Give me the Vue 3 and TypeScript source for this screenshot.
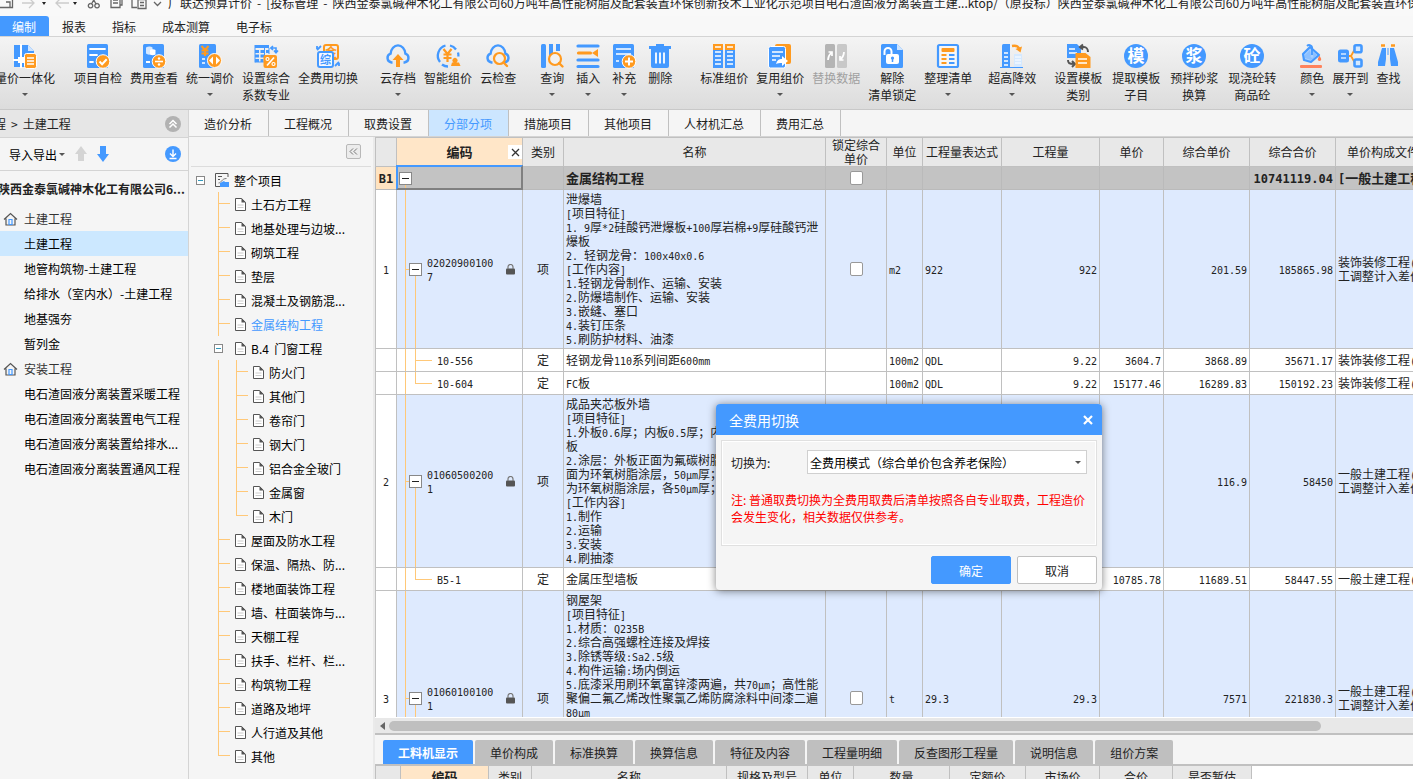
<script setup lang="ts">
import { h, ref } from 'vue'
import type { FunctionalComponent } from 'vue'

interface Tool { icon: string; lines: string[]; menu?: boolean; disabled?: boolean }
interface ToolGroup { name: string; tools: Tool[] }
interface TreeNode { text: string; depth: number; branch?: boolean; active?: boolean; last?: boolean }
interface Row {
  kind: 'group' | 'item' | 'child'
  no: string
  code: string[]
  type: string
  name: string[]
  check?: boolean
  unit?: string
  expr?: string
  qty?: string
  price?: string
  unitPrice?: string
  total?: string
  file: string[]
  last?: boolean
  tall?: boolean
}

/* Splits a string so that half-width characters sit on a fixed grid beside full-width ones. */
const MixedText: FunctionalComponent<{ text: string }> = (props) =>
  props.text
    .split(/([\x20-\x7eμ]+)/)
    .filter((s) => s.length > 0)
    .map((s) => h('span', { class: /^[\x20-\x7eμ]/.test(s) ? 'half' : 'full' }, s))
MixedText.props = ['text']

const B = '#4499ff'
const O = '#ff9a1f'
const disc = (c: string) =>
  `<circle cx="12" cy="12" r="12" fill="${B}"/><text x="12" y="18" font-size="17" font-weight="700" text-anchor="middle" fill="#fff" font-family="Noto Sans CJK SC, sans-serif">${c}</text>`
const page = `<rect x="1" y="0" width="21" height="24" rx="1.5" fill="${B}"/>`
const cloud = `<path d="M6.5 18.5H5.5A4.6 4.6 0 0 1 4.6 9.6C5 4.800 8.200 1.400 12 1.400s7 3.400 7.400 8.200a4.600 4.600 0 0 1-.9 8.900h-1" fill="none" stroke="${B}" stroke-width="2.4"/>`

const icons: Record<string, string> = {
  price: `<path d="M1 1h14l6 6v16H1z" fill="${B}"/><path d="M15 1l6 6h-6z" fill="#cfe5ff"/><path d="M8 0v24M0 16h14" stroke="#fff" stroke-width="2"/><rect x="5" y="13" width="6" height="6" fill="#fff"/><rect x="11.500" y="9.500" width="12" height="15" rx="2" fill="${O}" stroke="#fff"/><path d="M14 14h7M14 17h7M14 20h7" stroke="#fff" stroke-width="1.500"/>`,
  check: `${page}<path d="M4 5h15M4 11h7M4 18h3" stroke="#fff" stroke-width="1.800" stroke-linecap="round"/><circle cx="17" cy="17.500" r="6.800" fill="${O}" stroke="#fff"/><path d="M13.500 17.500l2.600 2.800 4.600-5" fill="none" stroke="#fff" stroke-width="2"/>`,
  cost: `${page}<path d="M4 3.500c2-1.500 5-1.500 6.500 0v6c-2 1.500-5 1.500-6.500 0z" fill="#d7e9ff"/><path d="M8 6c1.500-1 4-1 5.500 0v4.500c-1.500 1-4 1-5.500 0z" fill="#fff"/><path d="M4 18h4" stroke="#fff" stroke-width="2"/><circle cx="17" cy="17.500" r="6.800" fill="${O}" stroke="#fff"/><path d="M13 17.500h8" stroke="#fff" stroke-width="1.600"/><circle cx="17" cy="14.500" r="1.200" fill="#fff"/><circle cx="17" cy="20.500" r="1.200" fill="#fff"/>`,
  adjust: `<rect x="1" y="0" width="17" height="24" rx="1.500" fill="${B}"/><path d="M3.500 2l3.500 4 3.500-4M7 6v6M3.500 6.500h7M3.500 9.500h7" stroke="${O}" stroke-width="2" fill="none"/><path d="M4 15h3M4 19h3" stroke="#fff" stroke-width="1.600"/><circle cx="16.500" cy="16.500" r="7" fill="${O}" stroke="#fff"/><path d="M15 12.500v8l-4-4zM18 12.500v8l4-4z" fill="#fff"/>`,
  ratio: `<path d="M1 1h14v3H1zM1 6h4v3H1zM6.500 6h4v3h-4zM12 6h3v3h-3zM1 10.500h4v3H1zM6.500 10.500h4v3h-4zM1 15h4v3H1zM6.500 15h3v3h-3z" fill="${B}"/><path d="M1 1v17.500M1 18h9M15 4v6M10.500 4v10" stroke="${B}"/><path d="M17 4h5v4M20 6.500l2 2.300 2-2.300M19 2l-2.200 2L19 6" fill="none" stroke="${B}" stroke-width="1.600"/><rect x="9.500" y="11" width="13.500" height="13" rx="2" fill="${O}"/><path d="M20 13.500l-7 8" stroke="#fff" stroke-width="1.600"/><circle cx="13.500" cy="15" r="1.500" fill="none" stroke="#fff" stroke-width="1.200"/><circle cx="19.500" cy="20" r="1.500" fill="none" stroke="#fff" stroke-width="1.200"/>`,
  swap: `<rect x="8" y="1" width="14" height="14" rx="2" fill="none" stroke="${O}" stroke-width="2"/><text x="15" y="12.500" font-size="12" font-weight="700" text-anchor="middle" fill="${O}" font-family="Noto Sans CJK SC, sans-serif">金</text><rect x="2" y="8" width="15" height="15" rx="2" fill="#f4f8ff" stroke="${B}" stroke-width="2"/><text x="9.500" y="19.500" font-size="11" font-weight="700" text-anchor="middle" fill="${B}" font-family="Noto Sans CJK SC, sans-serif">综</text><path d="M1 6l4-4M19 22l4-4M23 22v-3M1 2v3" stroke="${B}" stroke-width="1.800"/>`,
  upload: `${cloud}<path d="M12 10l5.500 6H14v7h-4v-7H6.500z" fill="${O}"/>`,
  smart: `<path d="M9.500 1.500A10.500 10.500 0 0 0 4 18M6 20.500a10 10 0 0 0 6 2M14 1.500a10.500 10.500 0 0 1 6 4M22 8.500a10 10 0 0 1 .4 4" fill="none" stroke="${B}" stroke-width="2.300"/><path d="M7.500 5l4 5 4-5M11.500 10v8M7.500 10.500h8M7.500 14h8" fill="none" stroke="${O}" stroke-width="2.200"/><path d="M15 22l1-3.500h1.500a2.500 2.500 0 1 1 3 0H23l1.500 3.500z" fill="${O}"/>`,
  cloudcheck: `${cloud}<circle cx="13.500" cy="14.500" r="5.500" fill="#f0f0f0" stroke="${O}" stroke-width="2.200"/><path d="M17.500 18.500l3.500 3.500" stroke="${O}" stroke-width="2.400" stroke-linecap="round"/>`,
  query: `<rect x="1" y="0" width="5" height="24" rx="1.500" fill="${B}"/><path d="M9 0h4v9l-4 4zM16 0h4v7h-4z" fill="${B}"/><circle cx="15" cy="15" r="6" fill="#f2f2f2" stroke="${O}" stroke-width="2.200"/><path d="M19 19l3.500 3.500" stroke="${O}" stroke-width="2.400" stroke-linecap="round"/>`,
  insert: `<path d="M2 2h20M2 16h20M2 22.500h20" stroke="${B}" stroke-width="3.200" stroke-linecap="round"/><path d="M2.500 9h12" stroke="${O}" stroke-width="3.200" stroke-linecap="round"/><path d="M16 9l6-4v8z" fill="${O}"/>`,
  add: `${page}<path d="M4 5h15M4 10h15M4 17h3" stroke="#fff" stroke-width="1.500"/><circle cx="17" cy="17.500" r="6.800" fill="${O}" stroke="#fff"/><path d="M17 13.500v8M13 17.500h8" stroke="#fff" stroke-width="2"/>`,
  trash: `<path d="M1 2h7V0h8v2h7v3H1z" fill="${B}"/><path d="M3 5h18v17a2 2 0 0 1-2 2H5a2 2 0 0 1-2-2z" fill="${B}"/><path d="M8 8.500v11M12 8.500v11M16 8.500v11" stroke="#fff" stroke-width="1.800"/>`,
  standard: `<path d="M1 0h10v6H1zM13 0h10v6H13z" fill="${O}"/><path d="M1 6h10v18H1zM13 6h10v18H13z" fill="${B}"/><path d="M3 3h6M15 3h6M3 8h6M15 8h6M3 12h6M15 12h6M3 16h6M15 16h6M3 20h6M15 20h6" stroke="#fff" stroke-width="1.500"/>`,
  reuse: `<rect x="7" y="0" width="16" height="20" rx="2" fill="${O}"/><rect x=".5" y="2.500" width="17" height="21.500" rx="2" fill="${B}" stroke="#fff"/><path d="M4 8h11M4 12h8M4 16h4" stroke="#fff" stroke-width="1.600"/><path d="M8 20c1-4 3-5 6-5v-3l6 5-6 5v-3c-3 0-4 0-6 1z" fill="#fff"/>`,
  replace: `<rect x="1" y="0" width="10" height="24" rx="1.500" fill="#b4b4b4"/><rect x="13" y="0" width="10" height="24" rx="1.500" fill="#c8c8c8"/><path d="M4 16c0-4 1-5 3-7M4.500 8H8v4M20 8c0 4-1 5-3 7M16 12v4h3.500" fill="none" stroke="#fff" stroke-width="1.700"/>`,
  unlock: `<path d="M1 1.500A1.500 1.500 0 0 1 2.500 0H17l6 6v16.500a1.500 1.500 0 0 1-1.500 1.500h-19A1.500 1.500 0 0 1 1 22.500z" fill="${B}"/><path d="M17 0v6h6z" fill="#cfe5ff"/><rect x="6" y="10" width="13" height="10" rx="2" fill="#fff"/><path d="M4.500 11V7.500a3.500 3.500 0 0 1 7 0V11" fill="none" stroke="#fff" stroke-width="2"/><circle cx="12.500" cy="14" r="1.600" fill="${B}"/><path d="M12.500 14v4" stroke="${B}" stroke-width="1.500"/>`,
  tidy: `<rect x="2" y="1" width="20" height="22" rx="1.500" fill="#f6f6f6" stroke="${B}" stroke-width="2.200"/><rect x="5.500" y="4" width="13" height="4" rx="1" fill="${O}"/><path d="M5.500 11h5M5.500 15h5M5.500 19h5" stroke="${O}" stroke-width="1.800"/><path d="M13 11h5.500M13 15h5.500M13 19h5.500" stroke="${B}" stroke-width="1.800"/>`,
  height: `<path d="M2 1.500A1.500 1.500 0 0 1 3.500 0H10v24H2z" fill="${B}"/><path d="M4 9h4M4 13h4M4 17h4M4 21h4" stroke="#fff" stroke-width="1.500"/><rect x="14" y="10" width="8" height="13" fill="#d5e9ff"/><path d="M15 13h6M15 16h6M15 19h6" stroke="#fff"/><path d="M0 23.500h23" stroke="${B}"/><path d="M12 2c5-1 7 1 7.500 4" fill="none" stroke="${O}" stroke-width="2.400"/><path d="M15.500 5l5 3.500L22 2.500z" fill="${O}"/>`,
  template: `<path d="M1 0h10l4 4v10H1z" fill="${B}"/><path d="M3 5h6M3 9h8" stroke="#fff" stroke-width="1.300"/><path d="M14 3h4c2 0 4 2 4 5M17 .5L14 3l3 2.500" fill="none" stroke="#555" stroke-width="2"/><path d="M2 16c0 3 1 4 6 4M6 17l3 3-3 3" fill="none" stroke="#555" stroke-width="2"/><path d="M9.500 9h10l5 4v11h-15z" fill="${O}"/><path d="M12 15h9M12 19h9" stroke="#fff" stroke-width="1.600"/>`,
  mo: disc('模'),
  jiang: disc('浆'),
  tong: disc('砼'),
  color: `<path d="M10 3l9 8-8 7-7-2-1-6z" fill="#a9d0ff" stroke="${B}" stroke-width="2.200" stroke-linejoin="round"/><path d="M5 11l5-5 1 5a1.500 1.500 0 1 0 2 0V8l4 3-6 5-6-2z" fill="#8cc0ff"/><path d="M12 11V5a3 3 0 0 0-5-3" fill="none" stroke="${B}" stroke-width="1.800"/><path d="M19.500 11.500l1.500 3a1.700 1.700 0 1 1-3 0z" fill="#ff7f50"/><rect x="0" y="21" width="22" height="3" rx="1" fill="#ff835c"/>`,
  expand: `<path d="M9 12h4l4-7h2M13 12l4 7h2" fill="none" stroke="${O}" stroke-width="1.800"/><rect x="1" y="6.500" width="9" height="11" rx="1.500" fill="${B}" stroke="${B}" stroke-width="2"/><path d="M3 10h5M3 14h5" stroke="#d5e9ff" stroke-width="1.600"/><rect x="16.500" y="1.200" width="7" height="7" rx="1.500" fill="#d5e9ff" stroke="${B}" stroke-width="2.600"/><rect x="16.500" y="15.500" width="7" height="7" rx="1.500" fill="#d5e9ff" stroke="${B}" stroke-width="2.600"/>`,
  find: `<path d="M5 1.500h4M15 1.500h4" stroke="${O}" stroke-width="2.600"/><path d="M6 4h4v11l-1 7H2v-4zM14 4h4l4 14v4h-7l-1-7z" fill="${B}"/><path d="M12 4v7" stroke="${B}"/>`,
}

const toolGroups: ToolGroup[] = [
  { name: 'one', tools: [{ icon: 'price', lines: ['量价一体化'], menu: true }] },
  {
    name: 'check',
    tools: [
      { icon: 'check', lines: ['项目自检'] },
      { icon: 'cost', lines: ['费用查看'] },
      { icon: 'adjust', lines: ['统一调价'], menu: true },
      { icon: 'ratio', lines: ['设置综合', '系数专业'] },
      { icon: 'swap', lines: ['全费用切换'] },
    ],
  },
  {
    name: 'cloud',
    tools: [
      { icon: 'upload', lines: ['云存档'], menu: true },
      { icon: 'smart', lines: ['智能组价'] },
      { icon: 'cloudcheck', lines: ['云检查'] },
    ],
  },
  {
    name: 'edit',
    tools: [
      { icon: 'query', lines: ['查询'], menu: true },
      { icon: 'insert', lines: ['插入'], menu: true },
      { icon: 'add', lines: ['补充'], menu: true },
      { icon: 'trash', lines: ['删除'] },
    ],
  },
  {
    name: 'compose',
    tools: [
      { icon: 'standard', lines: ['标准组价'] },
      { icon: 'reuse', lines: ['复用组价'], menu: true },
      { icon: 'replace', lines: ['替换数据'], disabled: true },
      { icon: 'unlock', lines: ['解除', '清单锁定'] },
      { icon: 'tidy', lines: ['整理清单'], menu: true },
    ],
  },
  { name: 'tower', tools: [{ icon: 'height', lines: ['超高降效'], menu: true }] },
  {
    name: 'model',
    tools: [
      { icon: 'template', lines: ['设置模板', '类别'] },
      { icon: 'mo', lines: ['提取模板', '子目'] },
      { icon: 'jiang', lines: ['预拌砂浆', '换算'] },
      { icon: 'tong', lines: ['现浇砼转', '商品砼'] },
    ],
  },
  {
    name: 'view',
    tools: [
      { icon: 'color', lines: ['颜色'], menu: true },
      { icon: 'expand', lines: ['展开到'], menu: true },
      { icon: 'find', lines: ['查找'] },
    ],
  },
]

const menuTabs = ['编制', '报表', '指标', '成本测算', '电子标']
const titleParts = [
  '广联达预算计价',
  '-',
  '[投标管理',
  '-',
  '陕西金泰氯碱神木化工有限公司60万吨年高性能树脂及配套装置环保创新技术工业化示范项目电石渣固液分离装置土建...ktop/（原投标）陕西金泰氯碱神木化工有限公司60万吨年高性能树脂及配套装置环保',
]

const projects = [
  { text: '土建工程', home: true },
  { text: '土建工程', active: true },
  { text: '地管构筑物-土建工程' },
  { text: '给排水（室内水）-土建工程' },
  { text: '地基强夯' },
  { text: '暂列金' },
  { text: '安装工程', home: true },
  { text: '电石渣固液分离装置采暖工程' },
  { text: '电石渣固液分离装置电气工程' },
  { text: '电石渣固液分离装置给排水...' },
  { text: '电石渣固液分离装置通风工程' },
]

const pageTabs = ['造价分析', '工程概况', '取费设置', '分部分项', '措施项目', '其他项目', '人材机汇总', '费用汇总']
const activePage = ref('分部分项')

const tree: TreeNode[] = [
  { text: '土石方工程', depth: 1 },
  { text: '地基处理与边坡...', depth: 1 },
  { text: '砌筑工程', depth: 1 },
  { text: '垫层', depth: 1 },
  { text: '混凝土及钢筋混...', depth: 1 },
  { text: '金属结构工程', depth: 1, active: true },
  { text: 'B.4  门窗工程', depth: 1, branch: true },
  { text: '防火门', depth: 2 },
  { text: '其他门', depth: 2 },
  { text: '卷帘门', depth: 2 },
  { text: '钢大门', depth: 2 },
  { text: '铝合金全玻门', depth: 2 },
  { text: '金属窗', depth: 2 },
  { text: '木门', depth: 2, last: true },
  { text: '屋面及防水工程', depth: 1 },
  { text: '保温、隔热、防...', depth: 1 },
  { text: '楼地面装饰工程', depth: 1 },
  { text: '墙、柱面装饰与...', depth: 1 },
  { text: '天棚工程', depth: 1 },
  { text: '扶手、栏杆、栏...', depth: 1 },
  { text: '构筑物工程', depth: 1 },
  { text: '道路及地坪', depth: 1 },
  { text: '人行道及其他', depth: 1 },
  { text: '其他', depth: 1, last: true },
]

const rows: Row[] = [
  { kind: 'group', no: 'B1', code: [], type: '', name: ['金属结构工程'], check: true, total: '10741119.04', file: ['[一般土建工程]'] },
  {
    kind: 'item', no: '1', code: ['02020900100', '7'], type: '项',
    name: ['泄爆墙', '[项目特征]', '1. 9厚*2硅酸钙泄爆板+100厚岩棉+9厚硅酸钙泄', '爆板', '2. 轻钢龙骨：100x40x0.6', '[工作内容]', '1.轻钢龙骨制作、运输、安装', '2.防爆墙制作、运输、安装', '3.嵌缝、塞口', '4.装钉压条', '5.刷防护材料、油漆'],
    check: true, unit: 'm2', expr: '922', qty: '922', unitPrice: '201.59', total: '185865.98', file: ['装饰装修工程(人', '工调整计入差价)'],
  },
  { kind: 'child', no: '', code: ['10-556'], type: '定', name: ['轻钢龙骨110系列间距600mm'], unit: '100m2', expr: 'QDL', qty: '9.22', price: '3604.7', unitPrice: '3868.89', total: '35671.17', file: ['装饰装修工程(人'] },
  { kind: 'child', no: '', code: ['10-604'], type: '定', name: ['FC板'], unit: '100m2', expr: 'QDL', qty: '9.22', price: '15177.46', unitPrice: '16289.83', total: '150192.23', file: ['装饰装修工程(人'], last: true },
  {
    kind: 'item', no: '2', code: ['01060500200', '1'], type: '项',
    name: ['成品夹芯板外墙', '[项目特征]', '1.外板0.6厚；内板0.5厚；内', '板', '2.涂层：外板正面为氟碳树脂', '面为环氧树脂涂层，50μm厚；', '为环氧树脂涂层，各50μm厚；', '[工作内容]', '1.制作', '2.运输', '3.安装', '4.刷抽漆'],
    check: true, unitPrice: '116.9', total: '58450', file: ['一般土建工程(人', '工调整计入差价)'],
  },
  { kind: 'child', no: '', code: ['B5-1'], type: '定', name: ['金属压型墙板'], price: '10785.78', unitPrice: '11689.51', total: '58447.55', file: ['一般土建工程(人'], last: true },
  {
    kind: 'item', no: '3', code: ['01060100100', '1'], type: '项',
    name: ['钢屋架', '[项目特征]', '1.材质：Q235B', '2.综合高强螺栓连接及焊接', '3.除锈等级:Sa2.5级', '4.构件运输:场内倒运', '5.底漆采用刷环氧富锌漆两遍，共70μm；高性能', '聚偏二氟乙烯改性聚氯乙烯防腐涂料中间漆二遍', '80μm'],
    check: true, unit: 't', expr: '29.3', qty: '29.3', unitPrice: '7571', total: '221830.3', file: ['一般土建工程(人', '工调整计入差价)'], tall: true,
  },
]

const detailTabs = ['工料机显示', '单价构成', '标准换算', '换算信息', '特征及内容', '工程量明细', '反查图形工程量', '说明信息', '组价方案']
const activeDetail = ref('工料机显示')
const detailCols = ['', '编码', '类别', '名称', '规格及型号', '单位', '数量', '定额价', '市场价', '合价', '是否暂估']

const dialogOpen = ref(true)
const mode = ref('full')
</script>

<template>
  <div class="app">
    <header class="titlebar">
      <svg class="quick" width="168" height="24" viewBox="0 0 168 24" fill="none" stroke="#666" stroke-width="1.300">
        <path d="M0 17.500h12.500V2M6 12h4v5" />
        <path d="M22 13h12M29 8l5 5-5 5M57 13h12M61 8l-5 5 5 5" stroke="#ccc" />
        <path d="M90.500 13.500a2.200 2.200 0 1 0 .1 0M97 13.500a2.200 2.200 0 1 0 .1 0M91.500 14l5-9M96 14l-5-9" />
        <path d="M111 6v11.500h9V6M113 10h5M113 13h5M120 15h2V4M132 4v13.500h5M138 9.500h8v9h-8zM140 12.500h4M140 15.500h4" />
        <path d="M154 12l3.500 3.500L161 12" />
        <path d="M42 12h4l-2 3zM73 12h4l-2 3z" fill="#222" stroke="none" />
      </svg>
      <span v-for="(p, i) in titleParts" :key="i">{{ p }}</span>
    </header>

    <nav class="menu">
      <button v-for="(t, i) in menuTabs" :key="t" type="button" :class="{ active: i === 0 }">{{ t }}</button>
    </nav>

    <div class="ribbon">
      <div v-for="g in toolGroups" :key="g.name" class="tools" :class="'g-' + g.name">
        <button v-for="t in g.tools" :key="t.icon" type="button" class="tool" :disabled="t.disabled">
          <svg width="24" height="24" viewBox="0 0 24 24" v-html="icons[t.icon]"></svg>
          <span class="tool-text"><span v-for="l in t.lines" :key="l">{{ l }}</span></span>
          <i v-if="t.menu" class="caret"></i>
        </button>
      </div>
    </div>

    <div class="work">
      <aside class="projects">
        <div class="crumb">
          <span>程</span><span>&gt;</span><span>土建工程</span>
          <button type="button" class="round" aria-label="收起">
            <svg width="16" height="16" viewBox="0 0 16 16"><circle cx="8" cy="8" r="8" fill="#b2b2b2" /><path d="M4.500 8L8 4.500 11.500 8M4.500 11.500L8 8l3.500 3.500" fill="none" stroke="#fff" stroke-width="1.500" /></svg>
          </button>
        </div>
        <div class="io">
          <button type="button" class="io-menu">导入导出<i class="caret"></i></button>
          <button type="button" aria-label="上移"><svg width="12" height="16" viewBox="0 0 12 16"><path d="M6 0l6 8H9v7H3V8H0z" fill="#d4d4d4" /></svg></button>
          <button type="button" aria-label="下移"><svg width="12" height="16" viewBox="0 0 12 16"><path d="M3 0h6v8h3l-6 8-6-8h3z" fill="#4499ff" /></svg></button>
          <button type="button" class="round" aria-label="下载">
            <svg width="16" height="16" viewBox="0 0 16 16"><circle cx="8" cy="8" r="8" fill="#4499ff" /><path d="M8 3.500v7M5 7.500l3 3 3-3M4.500 12.500h7" fill="none" stroke="#fff" stroke-width="1.400" /></svg>
          </button>
        </div>
        <h2 class="project-name">陕西金泰氯碱神木化工有限公司6...</h2>
        <ul class="project-list">
          <li v-for="(p, i) in projects" :key="i" :class="{ active: p.active, head: p.home }">
            <svg v-if="p.home" width="15" height="14" viewBox="0 0 15 14" fill="none"><path d="M1 7.500L7.500 1.500 14 7.500M3 6.500v6.500h9V6.500" stroke="#555" stroke-width="1.200" /><path d="M6 12.500v-5h3v5z" stroke="#4499ff" stroke-width="1.200" /></svg>
            <span>{{ p.text }}</span>
          </li>
        </ul>
      </aside>

      <main class="main">
        <nav class="page-tabs">
          <button v-for="t in pageTabs" :key="t" type="button" :class="{ active: t === activePage }" @click="activePage = t">{{ t }}</button>
        </nav>
        <div class="split">
          <section class="tree-pane">
            <div class="tree-top">
              <button type="button" aria-label="折叠"><svg width="15" height="15" viewBox="0 0 15 15" fill="none"><path d="M7 4L3.500 7.500 7 11M11.500 4L8 7.500l3.500 3.500" stroke="#666" /></svg></button>
            </div>
            <ul class="tree">
              <li class="root">
                <i class="box"></i>
                <svg width="14" height="14" viewBox="0 0 14 14"><path d="M13 4V.5H.5v13H5M3 3.500h4M3 6.500h2" fill="none" stroke="#555" /><path d="M3.500 10c3 0 3-4.500 8-4.500" fill="none" stroke="#777" /><path d="M5 10l4-2 1 1h4v5H5z" fill="#4499ff" /></svg>
                <span>整个项目</span>
              </li>
              <li v-for="(n, i) in tree" :key="i" :class="{ active: n.active }">
                <i v-if="n.depth === 2" class="pass"></i>
                <i v-if="n.branch" class="box inner"></i>
                <i v-else class="elbow" :class="{ last: n.last }"></i>
                <svg class="doc" width="11" height="13" viewBox="0 0 11 13"><path d="M.5.5h6l4 4v8H.5z" fill="#fff" stroke="#555" /><path d="M6.500 0v4.500H11z" fill="#555" /><path d="M2.500 7h6M2.500 9.500h6" stroke="#ccc" /></svg>
                <span>{{ n.text }}</span>
              </li>
            </ul>
          </section>

          <section class="content">
            <div class="grid-view">
              <table class="grid">
                <colgroup>
                  <col class="c-no" /><col class="c-code" /><col class="c-type" /><col class="c-name" /><col class="c-lock" /><col class="c-unit" />
                  <col class="c-expr" /><col class="c-qty" /><col class="c-price" /><col class="c-sum" /><col class="c-sum" /><col class="c-file" />
                </colgroup>
                <thead>
                  <tr>
                    <th></th>
                    <th class="key"><div class="key-head"><span>编码</span><button type="button" aria-label="关闭"><svg width="9" height="9" viewBox="0 0 9 9"><path d="M1 1l7 7M8 1L1 8" stroke="#333" stroke-width="1.300" /></svg></button></div></th>
                    <th>类别</th><th>名称</th><th>锁定综合<br />单价</th><th>单位</th><th>工程量表达式</th><th>工程量</th><th>单价</th><th>综合单价</th><th>综合合价</th><th>单价构成文件</th>
                  </tr>
                </thead>
                <tbody>
                  <tr v-for="(r, i) in rows" :key="i" :class="[r.kind, { last: r.last, tall: r.tall }]">
                    <td class="no"><MixedText :text="r.no" /></td>
                    <td class="code">
                      <div class="code-in">
                        <i v-if="r.kind !== 'child'" class="plus"></i>
                        <div class="code-text"><div v-for="(c, k) in r.code" :key="k"><MixedText :text="c" /></div></div>
                        <svg v-if="r.kind === 'item'" width="9" height="11" viewBox="0 0 9 11"><rect x="0" y="4.500" width="9" height="6" rx="1" fill="#555" /><path d="M2 5V3a2.500 2.500 0 0 1 5 0v2" fill="none" stroke="#777" stroke-width="1.200" /></svg>
                      </div>
                    </td>
                    <td class="mid">{{ r.type }}</td>
                    <td class="name"><div v-for="(l, k) in r.name" :key="k"><MixedText :text="l" /></div></td>
                    <td class="mid"><input v-if="r.check" type="checkbox" aria-label="锁定综合单价" /></td>
                    <td><MixedText :text="r.unit ?? ''" /></td>
                    <td><MixedText :text="r.expr ?? ''" /></td>
                    <td class="num"><MixedText :text="r.qty ?? ''" /></td>
                    <td class="num"><MixedText :text="r.price ?? ''" /></td>
                    <td class="num"><MixedText :text="r.unitPrice ?? ''" /></td>
                    <td class="num"><MixedText :text="r.total ?? ''" /></td>
                    <td><div v-for="(l, k) in r.file" :key="k"><MixedText :text="l" /></div></td>
                  </tr>
                </tbody>
              </table>
            </div>
            <div class="hscroll">
              <svg width="6" height="8" viewBox="0 0 6 8"><path d="M6 0v8L1 4z" fill="#666" /></svg>
              <div class="track"><div class="thumb"></div></div>
            </div>
            <nav class="detail-tabs">
              <button v-for="t in detailTabs" :key="t" type="button" :class="{ active: t === activeDetail }" @click="activeDetail = t">{{ t }}</button>
            </nav>
            <div class="detail-view">
              <table class="detail">
                <colgroup><col v-for="(c, i) in detailCols" :key="i" :class="'d' + i" /></colgroup>
                <thead><tr><th v-for="(c, i) in detailCols" :key="i" :class="{ key: i === 1 }">{{ c }}</th></tr></thead>
              </table>
            </div>
          </section>
        </div>
      </main>
    </div>

    <div v-if="dialogOpen" class="dialog" role="dialog" aria-labelledby="dlg-title">
      <div class="dialog-head">
        <h3 id="dlg-title">全费用切换</h3>
        <button type="button" aria-label="关闭" @click="dialogOpen = false"><svg width="10" height="10" viewBox="0 0 10 10"><path d="M1 1l8 8M9 1L1 9" stroke="#fff" stroke-width="2.200" /></svg></button>
      </div>
      <div class="dialog-body">
        <div class="field">
          <label for="mode">切换为:</label>
          <div class="select">
            <select id="mode" v-model="mode"><option value="full">全费用模式（综合单价包含养老保险）</option></select>
            <i class="caret"></i>
          </div>
        </div>
        <p>注: 普通取费切换为全费用取费后清单按照各自专业取费，工程造价会发生变化，相关数据仅供参考。</p>
      </div>
      <div class="dialog-foot">
        <button type="button" class="primary" @click="dialogOpen = false">确定</button>
        <button type="button" @click="dialogOpen = false">取消</button>
      </div>
    </div>
  </div>
</template>

<style>
body {
  margin: 0;
  overflow: hidden;
}
.half {
  font-family: "DejaVu Sans Mono", monospace;
  font-size: 10px;
  line-height: 10px;
  white-space: pre;
}
.group .half {
  font-size: 12px;
}
.full {
  white-space: pre;
}
</style>

<style scoped>
.app {
  position: relative;
  display: flex;
  flex-direction: column;
  height: 100vh;
  overflow: hidden;
  background: #f5f5f5;
  color: #222;
  font: 12px/17px "Noto Sans CJK SC", sans-serif;
}
button {
  margin: 0;
  padding: 0;
  border: 0;
  background: none;
  color: inherit;
  font: inherit;
}
ul, h2, h3, p {
  margin: 0;
  padding: 0;
  list-style: none;
}
svg {
  display: block;
  flex: none;
}
.caret {
  flex: none;
  width: 0;
  height: 0;
  border: 3px solid transparent;
  border-top-color: #555;
  border-bottom: 0;
}

.titlebar {
  display: flex;
  flex: none;
  align-items: center;
  gap: 5px;
  height: 28px;
  margin-top: -12px;
  background: #f9f9f9;
  white-space: nowrap;
}
.titlebar .quick {
  margin-right: -5px;
}
.menu {
  display: flex;
  flex: none;
  height: 20px;
  border-bottom: 1px solid #d4d4d4;
  background: #f8f8f8;
}
.menu button {
  padding: 0 13px;
}
.menu button:first-child {
  padding-left: 12px;
}
.menu .active {
  border-radius: 0 3px 0 0;
  background: #4499ff;
  color: #fff;
}

.ribbon {
  display: flex;
  flex: none;
  box-sizing: border-box;
  height: 73px;
  padding-top: 7px;
  border-bottom: 1px solid #c8c8c8;
  background: linear-gradient(#f4f4f4, #dcdcdc);
}
.ribbon .tools {
  display: flex;
  flex: none;
  gap: 8px;
}
.ribbon .g-one { margin-left: -5px; }
.ribbon .g-check { margin-left: 19px; }
.ribbon .g-cloud { margin-left: 22px; }
.ribbon .g-edit { margin-left: 24px; gap: 12px; }
.ribbon .g-compose { margin-left: 28px; }
.ribbon .g-tower { margin-left: 16px; }
.ribbon .g-model { margin-left: 18px; gap: 10px; }
.ribbon .g-view { margin-left: 24px; gap: 8px; }
.tool {
  display: flex;
  flex-direction: column;
  align-items: center;
}
.tool:disabled {
  color: #a0a0a0;
}
.tool svg {
  overflow: visible;
}
.tool-text {
  display: flex;
  flex-direction: column;
  align-items: center;
  margin-top: 1px;
  white-space: nowrap;
}
.tool .caret {
  margin-top: 7px;
}

.work {
  display: flex;
  flex: 1;
  min-height: 0;
}
.projects {
  flex: none;
  width: 188px;
  border-right: 1px solid #d4d4d4;
  overflow: hidden;
}
.crumb {
  display: flex;
  align-items: center;
  gap: 5px;
  height: 27px;
  margin-left: -6px;
  padding-right: 7px;
  border-bottom: 1px solid #d4d4d4;
  background: #e6e6e6;
}
.round {
  margin-left: auto;
}
.io {
  display: flex;
  align-items: center;
  gap: 10px;
  height: 32px;
  padding: 0 7px 0 9px;
  border-bottom: 1px solid #d4d4d4;
}
.io-menu {
  display: flex;
  align-items: center;
  gap: 2px;
  color: #000;
}
.project-name {
  margin-left: -2px;
  font-size: 12px;
  font-weight: 700;
  line-height: 35px;
  white-space: nowrap;
}
.project-list li {
  display: flex;
  align-items: center;
  height: 25px;
  padding-left: 24px;
  color: #000;
  white-space: nowrap;
}
.project-list .head {
  gap: 6px;
  padding-left: 3px;
  color: #333;
}
.project-list .active {
  background: #cce8ff;
}

.main {
  display: flex;
  flex: 1;
  flex-direction: column;
  min-width: 0;
}
.page-tabs {
  display: flex;
  flex: none;
  height: 26px;
  border-bottom: 1px solid #d4d4d4;
}
.page-tabs button {
  padding: 0 16px 0 15px;
  border-right: 1px solid #c0c0c0;
}
.page-tabs .active {
  background: #cce6ff;
  color: #4499ff;
}
.split {
  display: flex;
  flex: 1;
  min-height: 0;
}

.tree-pane {
  flex: none;
  width: 184px;
  border-right: 2px solid #eaeaea;
  overflow: hidden;
}
.tree-top {
  display: flex;
  align-items: center;
  justify-content: flex-end;
  height: 29px;
  margin: 0 2px;
  padding-right: 10px;
  border-bottom: 1px solid #dcdcdc;
}
.tree-top button {
  border: 1px solid #b8b8b8;
  border-radius: 2px;
  background: #ececec;
}
.tree-top svg {
  width: 13px;
  height: 13px;
}
.tree {
  padding-top: 1px;
}
.tree li {
  display: flex;
  align-items: center;
  height: 24px;
  padding-left: 29px;
  color: #000;
  white-space: pre;
}
.tree li.root {
  gap: 5px;
  padding-left: 7px;
}
.tree .active {
  color: #4499ff;
}
.tree .box {
  flex: none;
  box-sizing: border-box;
  width: 9px;
  height: 9px;
  border: 1px solid #888;
  background: linear-gradient(#39b, #39b) center / 5px 1px no-repeat #fff;
}
.root .box {
  margin-right: 5px;
}
.tree .box.inner {
  margin-left: -4px;
  margin-right: 12px;
}
.pass {
  flex: none;
  width: 18px;
  height: 24px;
  background: linear-gradient(#ffc878, #ffc878) 0 0 / 1px 100% no-repeat;
}
.elbow {
  flex: none;
  width: 12px;
  height: 24px;
  margin-right: 5px;
  background:
    linear-gradient(#ffc878, #ffc878) 0 0 / 1px 100% no-repeat,
    linear-gradient(#ffc878, #ffc878) 0 11px / 100% 1px no-repeat;
}
.elbow.last {
  background:
    linear-gradient(#ffc878, #ffc878) 0 0 / 1px 12px no-repeat,
    linear-gradient(#ffc878, #ffc878) 0 11px / 100% 1px no-repeat;
}
.doc {
  margin-right: 5px;
}

.content {
  display: flex;
  flex: 1;
  flex-direction: column;
  min-width: 0;
}
.grid-view {
  flex: 1;
  min-height: 0;
  overflow: hidden;
  border-top: 1px solid #c0c0c0;
  background: #fff;
}
table {
  border-collapse: separate;
  border-spacing: 0;
  table-layout: fixed;
  line-height: 14px;
}
.grid { width: 1056px; }
.c-no { width: 22px; }
.c-code { width: 126px; }
.c-type { width: 41px; }
.c-name { width: 262px; }
.c-lock { width: 61px; }
.c-unit { width: 36px; }
.c-expr { width: 79px; }
.c-qty { width: 98px; }
.c-price { width: 64px; }
.c-sum { width: 86px; }
.c-file { width: 95px; }
th, td {
  box-sizing: border-box;
  padding: 0;
  border-right: 1px solid #c0c0c0;
  border-bottom: 1px solid #c0c0c0;
  font-weight: 400;
  white-space: nowrap;
  overflow: hidden;
}
th:first-child, td:first-child {
  border-left: 1px solid #c0c0c0;
}
th {
  height: 29px;
  background: #e8e8e8;
}
th.key {
  background: #ffe6c8;
  font-size: 13px;
  font-weight: 700;
}
.key-head {
  display: flex;
  align-items: center;
}
.key-head span {
  flex: 1;
  padding-left: 14px;
}
.key-head button {
  display: flex;
  align-items: center;
  justify-content: center;
  width: 14px;
  height: 14px;
  background: #fff;
}
td {
  height: 23px;
  padding: 2px;
}
td.no, td.mid {
  text-align: center;
}
td.no {
  padding: 2px 0;
}
td.num {
  text-align: right;
}
.item td {
  background-color: #deeafe;
}
td.no, .item td.no {
  background: #fff;
}
.tall td {
  height: 215px;
}
.tall td.name {
  vertical-align: top;
}
.grid .group td {
  position: relative;
  background: #c3c3c3;
  border-color: #bababa;
  font-size: 13px;
  font-weight: 700;
}
.grid .group td.no {
  background: #ffe3c0;
}
td.code {
  padding: 0;
  background-image: linear-gradient(#ffc878, #ffc878);
  background-position: 8px 0;
  background-size: 1px 100%;
  background-repeat: no-repeat;
}
.grid .group td.code {
  overflow: visible;
  background: linear-gradient(#ffc878, #ffc878) 8px 100% / 1px 6px no-repeat #c3c3c3;
}
.group td.code::after {
  content: "";
  position: absolute;
  inset: -2px -1px -1px -1px;
  border: 2px solid;
  border-color: #4499ff #808080 #808080 #4499ff;
}
.item td.code {
  background-image: linear-gradient(#ffc878, #ffc878), linear-gradient(#ffc878, #ffc878), linear-gradient(#ffc878, #ffc878);
  background-position: 8px 0, 8px 50%, 18px 100%;
  background-size: 1px 100%, 5px 1px, 1px 50%;
}
.child td.code {
  background-image: linear-gradient(#ffc878, #ffc878), linear-gradient(#ffc878, #ffc878), linear-gradient(#ffc878, #ffc878);
  background-position: 8px 0, 18px 50%, 18px 0;
  background-size: 1px 100%, 17px 1px, 1px 100%;
}
.child.last td.code {
  background-size: 1px 100%, 17px 1px, 1px 50%;
}
.code-in {
  display: flex;
  align-items: center;
  padding: 0 7px 0 12px;
}
.group .code-in {
  padding-left: 2px;
}
.child .code-in {
  padding-left: 40px;
}
.code-text {
  flex: 1;
}
.plus {
  flex: none;
  box-sizing: border-box;
  width: 13px;
  height: 13px;
  margin-right: 5px;
  border: 1px solid #888;
  background: linear-gradient(#222, #222) center / 7px 1px no-repeat #fff;
}
td input {
  display: block;
  appearance: none;
  box-sizing: border-box;
  width: 13px;
  height: 14px;
  margin: 0 auto;
  border: 1px solid #999;
  border-radius: 2px;
  background: #fff;
}

.hscroll {
  display: flex;
  flex: none;
  align-items: center;
  gap: 4px;
  height: 15px;
  padding-left: 4px;
  border-top: 1px solid #fff;
  border-bottom: 2px solid #c0c0c0;
  background: #e8e8e8;
}
.track {
  flex: 1;
}
.thumb {
  width: 91%;
  height: 10px;
  border-radius: 5px;
  background: #bfbfbf;
}
.detail-tabs {
  display: flex;
  flex: none;
  gap: 2px;
  padding: 5px 8px 0;
  border-bottom: 2px solid #c0c0c0;
}
.detail-tabs button {
  height: 24px;
  padding: 0 15px;
  border-radius: 2px 2px 0 0;
  background: #bfbfbf;
}
.detail-tabs .active {
  background: #4499ff;
  color: #fff;
  font-weight: 700;
}
.detail-view {
  flex: none;
  height: 13px;
  overflow: hidden;
  background: #fff;
}
.detail { width: 877px; }
.detail th { height: 22px; }
.d0 { width: 26px; }
.d1 { width: 88px; }
.d2 { width: 43px; }
.d3 { width: 195px; }
.d4 { width: 81px; }
.d5 { width: 46px; }
.d6 { width: 96px; }
.d7 { width: 76px; }
.d8 { width: 74px; }
.d9 { width: 73px; }
.d10 { width: 79px; }

.dialog {
  position: absolute;
  top: 404px;
  left: 716px;
  width: 386px;
  border-radius: 4px;
  background: #f5f5f5;
  box-shadow: 0 1px 8px rgba(0, 0, 0, 0.5);
  overflow: hidden;
}
.dialog-head {
  display: flex;
  align-items: center;
  justify-content: space-between;
  height: 31px;
  padding: 0 9px 0 13px;
  background: #4499ff;
  color: #fff;
}
.dialog-head h3 {
  padding-top: 2px;
  font-size: 14px;
  font-weight: 400;
}
.dialog-body {
  box-sizing: border-box;
  height: 106px;
  margin: 5px;
  padding: 9px 9px 0 9px;
  border: 1px solid #e0e0e0;
  box-shadow: inset 0 0 0 1px #fff;
}
.field {
  display: flex;
  align-items: center;
  justify-content: space-between;
}
.select {
  display: flex;
  position: relative;
  width: 280px;
}
.select select {
  appearance: none;
  width: 100%;
  height: 24px;
  padding: 0 2px;
  border: 1px solid #d0d0d0;
  border-radius: 0;
  background: #fff;
  color: #000;
  font: inherit;
}
.select .caret {
  position: absolute;
  top: 11px;
  right: 6px;
}
.dialog-body p {
  margin-top: 17px;
  margin-right: -1px;
  color: #f00;
}
.dialog-foot {
  display: flex;
  justify-content: flex-end;
  gap: 6px;
  padding: 5px 5px 6px;
}
.dialog-foot button {
  box-sizing: border-box;
  width: 80px;
  height: 28px;
  border: 1px solid #c0c0c0;
  border-radius: 2px;
  background: #fff;
}
.dialog-foot .primary {
  border-color: #4499ff;
  background: #4499ff;
  color: #fff;
}
</style>
